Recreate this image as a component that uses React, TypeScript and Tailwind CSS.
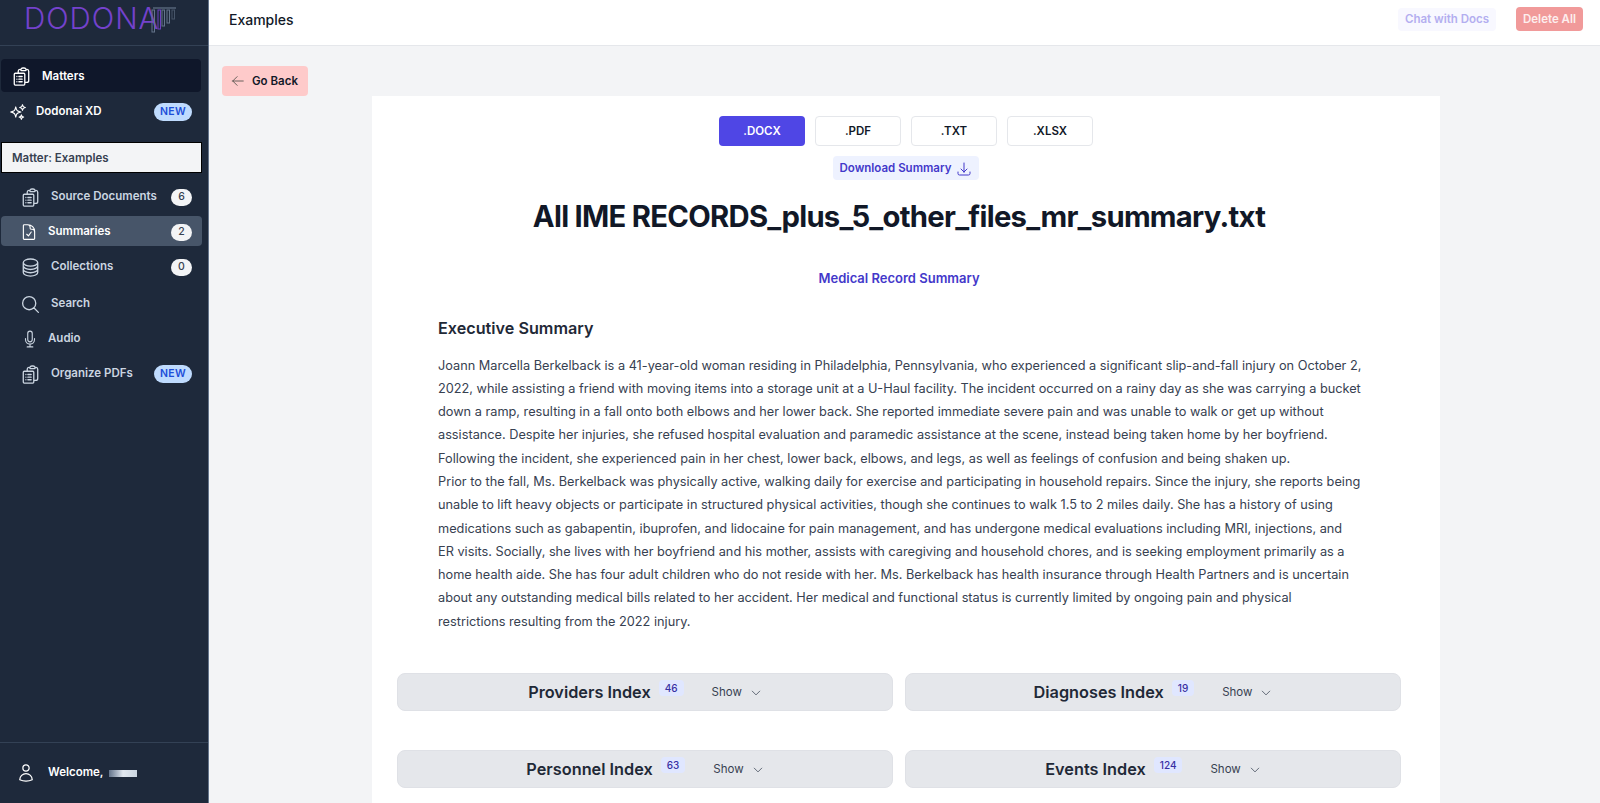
import React from 'react'
import {
  HiOutlineArrowDownTray,
  HiOutlineArrowLeft,
  HiOutlineChevronDown,
  HiOutlineCircleStack,
  HiOutlineClipboardDocumentList,
  HiOutlineDocumentCheck,
  HiOutlineMagnifyingGlass,
  HiOutlineMicrophone,
  HiOutlineSparkles,
  HiOutlineUser,
} from 'react-icons/hi2'

const NewBadge = () => (
  <span className="flex h-[18px] w-[38px] items-center justify-center rounded-full bg-[#bfdbfe] text-[10.5px] font-semibold tracking-wide text-[#1d4ed8]">
    NEW
  </span>
)

const Count = ({ value }: { value: number }) => (
  <span className="flex h-[17px] w-[21px] items-center justify-center rounded-full bg-[#f3f4f6] text-[10.5px] font-medium text-[#374151]">
    {value}
  </span>
)

const Logo = () => (
  <div className="flex h-[46px] items-start border-b border-[#334155] pl-[24px]">
    <span className="text-[29.5px] leading-[36px] font-light tracking-[1px] text-[#7442cc]">DODONA</span>
    <svg width="26" height="28" viewBox="0 0 26 28" fill="none" className="mt-[6px] ml-[-8px]" stroke="#64748b" strokeWidth="1">
      <path d="M2 2h23" stroke="#475569" strokeWidth="2" />
      <rect x="1" y="4" width="2.5" height="22" />
      <rect x="7" y="4" width="2.5" height="19" stroke="#6d3fc0" />
      <rect x="11" y="4" width="2.5" height="16" />
      <rect x="16" y="4" width="2.5" height="13" />
      <rect x="21" y="4" width="2.5" height="9" stroke="#475569" />
    </svg>
  </div>
)

const Sidebar = () => (
  <aside className="flex h-[803px] w-[209px] shrink-0 flex-col border-r border-[#64748b] bg-[#1e293b] text-[#e2e8f0]">
    <Logo />
    <nav className="flex flex-col text-[11.5px] font-semibold">
      <a className="mt-[13px] ml-[1px] flex h-[33px] w-[200px] items-center gap-[10px] rounded bg-[#0f172a] pt-[2px] pl-[10px] text-white">
        <HiOutlineClipboardDocumentList className="h-[21px] w-[21px]" />
        Matters
      </a>
      <a className="mt-[1px] flex h-[35px] items-center pt-[2px] pr-[16px] pl-[9px] text-white">
        <HiOutlineSparkles className="h-[18px] w-[18px]" />
        <span className="ml-[9px] flex-1">Dodonai XD</span>
        <NewBadge />
      </a>
      <div className="mt-[14px] ml-[1px] flex h-[31px] w-[201px] items-center border border-black bg-[#f3f4f6] pt-[2px] pl-[10px] text-[#374151]">
        Matter: Examples
      </div>
      <a className="mt-[5px] flex h-[36px] items-center pt-[2px] pr-[16px] pl-[20px] text-[#cbd5e1]">
        <HiOutlineClipboardDocumentList className="h-[21px] w-[21px] shrink-0" />
        <span className="ml-[10px] flex-1">Source Documents</span>
        <Count value={6} />
      </a>
      <a className="mt-[2px] ml-[1px] flex h-[30px] w-[201px] items-center rounded bg-[#475569] pt-[2px] pr-[10px] pl-[19px] text-white">
        <HiOutlineDocumentCheck className="h-[18px] w-[18px] shrink-0" />
        <span className="ml-[10px] flex-1">Summaries</span>
        <Count value={2} />
      </a>
      <a className="mt-[2px] flex h-[36px] items-center pt-[2px] pr-[16px] pl-[20px] text-[#cbd5e1]">
        <HiOutlineCircleStack className="h-[21px] w-[21px] shrink-0" />
        <span className="ml-[10px] flex-1">Collections</span>
        <Count value={0} />
      </a>
      <a className="mt-[1px] flex h-[36px] items-center pt-[2px] pl-[20px] text-[#cbd5e1]">
        <HiOutlineMagnifyingGlass className="h-[21px] w-[21px] shrink-0" />
        <span className="ml-[10px]">Search</span>
      </a>
      <a className="flex h-[34px] items-center pt-[2px] pl-[21px] text-[#cbd5e1]">
        <HiOutlineMicrophone className="h-[18px] w-[18px] shrink-0" />
        <span className="ml-[9px]">Audio</span>
      </a>
      <a className="flex h-[36px] items-center pt-[2px] pr-[16px] pl-[20px] text-[#cbd5e1]">
        <HiOutlineClipboardDocumentList className="h-[21px] w-[21px] shrink-0" />
        <span className="ml-[10px] flex-1">Organize PDFs</span>
        <NewBadge />
      </a>
    </nav>
    <div className="mt-auto flex h-[61px] items-center border-t border-[#334155] pl-[16px] text-[11.5px] font-semibold text-white">
      <HiOutlineUser className="h-[20px] w-[20px]" />
      <span className="ml-[12px]">Welcome,</span>
      <span className="ml-[6px] h-[7px] w-[28px] bg-gradient-to-r from-[#64748b] via-[#e2e8f0] to-[#cbd5e1] blur-[0.5px]" />
    </div>
  </aside>
)

const IndexRow = ({ title, count }: { title: string; count: number }) => (
  <div className="flex h-[38px] items-center justify-center rounded-lg border border-[#dfe1e6] bg-[#e5e7eb]">
    <span className="text-[16.3px] font-semibold text-[#1f2937]">{title}</span>
    <span className="mb-[8px] ml-[8px] rounded bg-[#e0e7ff] px-[6px] text-[10px] leading-[16px] font-medium text-[#3730a3]">
      {count}
    </span>
    <span className="mt-[2px] ml-[28px] text-[11.5px] text-[#374151]">Show</span>
    <HiOutlineChevronDown className="mt-[2px] ml-[8px] h-[12px] w-[12px] text-[#374151]" />
  </div>
)

const paragraphs = [
  'Joann Marcella Berkelback is a 41-year-old woman residing in Philadelphia, Pennsylvania, who experienced a significant slip-and-fall injury on October 2, 2022, while assisting a friend with moving items into a storage unit at a U-Haul facility. The incident occurred on a rainy day as she was carrying a bucket down a ramp, resulting in a fall onto both elbows and her lower back. She reported immediate severe pain and was unable to walk or get up without assistance. Despite her injuries, she refused hospital evaluation and paramedic assistance at the scene, instead being taken home by her boyfriend. Following the incident, she experienced pain in her chest, lower back, elbows, and legs, as well as feelings of confusion and being shaken up.',
  'Prior to the fall, Ms. Berkelback was physically active, walking daily for exercise and participating in household repairs. Since the injury, she reports being unable to lift heavy objects or participate in structured physical activities, though she continues to walk 1.5 to 2 miles daily. She has a history of using medications such as gabapentin, ibuprofen, and lidocaine for pain management, and has undergone medical evaluations including MRI, injections, and\nER visits. Socially, she lives with her boyfriend and his mother, assists with caregiving and household chores, and is seeking employment primarily as a home health aide. She has four adult children who do not reside with her. Ms. Berkelback has health insurance through Health Partners and is uncertain about any outstanding medical bills related to her accident. Her medical and functional status is currently limited by ongoing pain and physical\nrestrictions resulting from the 2022 injury.',
]

const formats = ['.DOCX', '.PDF', '.TXT', '.XLSX']

const App = () => {
  return (
    <div className="flex h-[803px] overflow-hidden bg-[#f3f4f6] font-['Inter',sans-serif]">
      <Sidebar />
      <main className="flex min-w-0 flex-1 flex-col">
        <header className="flex h-[46px] shrink-0 items-center justify-between border-b border-[#e5e7eb] bg-white pr-[17px] pb-[7px] pl-[20px]">
          <h1 className="text-[14px] font-medium text-[#111827]">Examples</h1>
          <div className="flex items-center gap-[20px] text-[11.5px] font-semibold">
            <button className="h-[23px] w-[98px] rounded bg-[#f8f8ff] pt-[2px] text-[#b3aef0]">Chat with Docs</button>
            <button className="h-[24px] w-[67px] rounded bg-[#f19a9a] pt-[2px] text-[#fdeeee]">Delete All</button>
          </div>
        </header>
        <div className="flex">
          <button className="mt-[20px] ml-[13px] flex h-[30px] w-[86px] items-center gap-[7px] rounded bg-[#fecaca] pl-[9px] text-[11.5px] font-semibold text-[#111827]">
            <HiOutlineArrowLeft className="h-[14px] w-[14px] text-[#57534e]" />
            <span className="pt-[2px]">Go Back</span>
          </button>
          <article className="mt-[50px] ml-[64px] h-[707px] w-[1068px] bg-white">
            <div className="flex flex-col items-center pt-[20px]">
              <div className="flex gap-[10px]">
                {formats.map((format, i) => (
                  <button
                    key={format}
                    className={
                      i === 0
                        ? 'h-[30px] w-[86px] rounded bg-[#4f46e5] pt-[2px] text-[11.5px] font-semibold text-white'
                        : 'h-[30px] w-[86px] rounded border border-[#e5e7eb] bg-white pt-[2px] text-[11.5px] font-semibold text-[#111827]'
                    }
                  >
                    {format}
                  </button>
                ))}
              </div>
              <button className="mt-[10px] flex h-[24px] w-[146px] items-center justify-center gap-[5px] rounded bg-[#eef2ff] pt-[2px] text-[11.5px] font-semibold text-[#4338ca]">
                Download Summary
                <HiOutlineArrowDownTray className="h-[16px] w-[16px]" />
              </button>
              <h2 className="mt-[15px] mr-[14px] text-[29.25px] leading-[44px] font-bold tracking-[-0.73px] text-[#111827]">
                All IME RECORDS_plus_5_other_files_mr_summary.txt
              </h2>
            </div>
            <p className="mt-[30px] pr-[14px] text-center text-[13px] font-semibold text-[#4338ca]">Medical Record Summary</p>
            <section className="mt-[27px] px-[66px] text-[#374151]">
              <h3 className="text-[16.2px] leading-[24px] font-semibold text-[#1f2937]">Executive Summary</h3>
              <div className="mt-[14px] w-[925px] text-[12.74px] leading-[23.3px]">
                {paragraphs.map((text) => (
                  <p key={text.slice(0, 12)} className="whitespace-pre-line">
                    {text}
                  </p>
                ))}
              </div>
            </section>
            <div className="mt-[40px] grid grid-cols-2 gap-x-[12px] gap-y-[39px] pr-[39px] pl-[25px]">
              <IndexRow title="Providers Index" count={46} />
              <IndexRow title="Diagnoses Index" count={19} />
              <IndexRow title="Personnel Index" count={63} />
              <IndexRow title="Events Index" count={124} />
            </div>
          </article>
        </div>
      </main>
    </div>
  )
}

export default App
